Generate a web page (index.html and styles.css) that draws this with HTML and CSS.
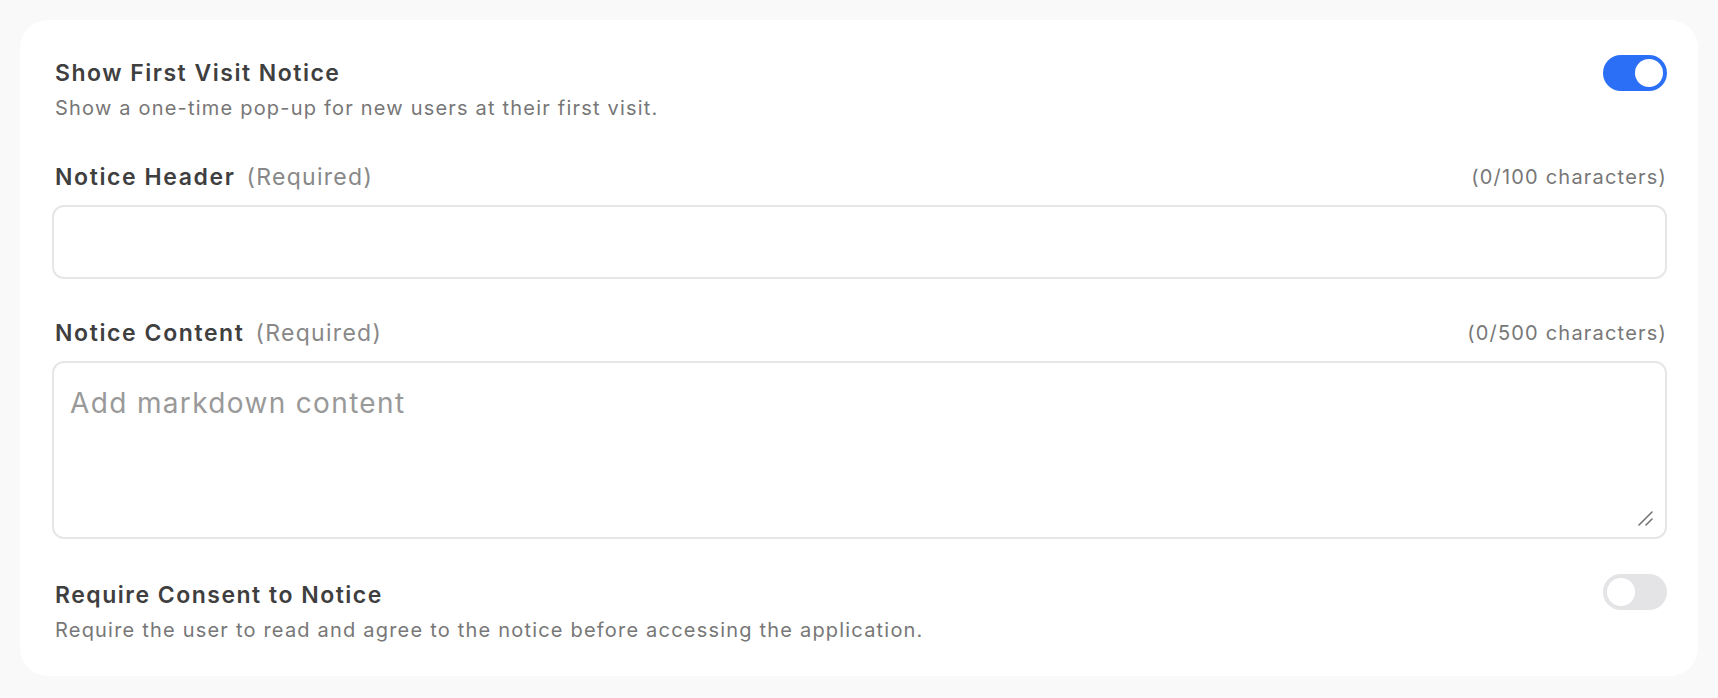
FILE: index.html
```html
<!DOCTYPE html>
<html lang="en">
<head>
<meta charset="utf-8">
<title>First Visit Notice</title>
<link rel="stylesheet" href="styles.css">
</head>
<body>
<div class="card">
  <div class="toggle-row">
    <div class="toggle-text">
      <div class="title">Show First Visit Notice</div>
      <div class="desc">Show a one-time pop-up for new users at their first visit.</div>
    </div>
    <div class="switch on"><span class="knob"></span></div>
  </div>

  <div class="field field-header">
    <div class="label-row">
      <div class="label">Notice Header<span class="req">(Required)</span></div>
      <div class="counter">(0/100 characters)</div>
    </div>
    <input class="text-input" type="text">
  </div>

  <div class="field field-content">
    <div class="label-row">
      <div class="label">Notice Content<span class="req">(Required)</span></div>
      <div class="counter">(0/500 characters)</div>
    </div>
    <div class="area-wrap">
      <textarea class="text-area" placeholder="Add markdown content"></textarea>
      <svg class="grip" width="16" height="16" viewBox="0 0 16 16" aria-hidden="true">
        <line x1="1" y1="15" x2="14" y2="2"/>
        <line x1="8" y1="15" x2="14" y2="9"/>
      </svg>
    </div>
  </div>

  <div class="toggle-row toggle-row-last">
    <div class="toggle-text">
      <div class="title">Require Consent to Notice</div>
      <div class="desc">Require the user to read and agree to the notice before accessing the application.</div>
    </div>
    <div class="switch off"><span class="knob"></span></div>
  </div>
</div>
</body>
</html>
```

FILE: styles.css
```css
* { box-sizing: border-box; }

html, body {
  margin: 0;
  padding: 0;
  background: #f9f9f9;
}

body {
  padding: 20px;
  font-family: "Inter", "Liberation Sans", sans-serif;
  color: #404040;
}

.card {
  background: #ffffff;
  border-radius: 28px;
  padding: 34px 31px 32px 32px;
  height: 656px;
}

.toggle-row {
  display: flex;
  justify-content: space-between;
  align-items: flex-start;
}

.toggle-row-last {
  margin-top: 37px;
}

.toggle-text {
  padding-left: 3px;
}

.title {
  font-size: 23px;
  font-weight: 600;
  line-height: 38px;
  letter-spacing: 1.5px;
  color: #3f3f3f;
}

.desc {
  margin-top: 2px;
  font-size: 20px;
  line-height: 28px;
  letter-spacing: 1.2px;
  color: #777777;
}

.switch {
  position: relative;
  width: 64px;
  height: 36px;
  border-radius: 18px;
  margin-top: 1px;
  flex-shrink: 0;
}

.toggle-row-last .switch { margin-top: -2px; }

.switch.on { background: #2a6ff5; }
.switch.off { background: #e4e4e7; }

.knob {
  position: absolute;
  top: 4px;
  width: 28px;
  height: 28px;
  border-radius: 50%;
  background: #ffffff;
}

.switch.on .knob { right: 4px; }
.switch.off .knob { left: 4px; }

.field-header { margin-top: 38px; }
.field-content { margin-top: 37px; }

.label-row {
  display: flex;
  justify-content: space-between;
  align-items: center;
  padding-left: 3px;
}

.label {
  font-size: 23px;
  font-weight: 600;
  line-height: 34px;
  letter-spacing: 1.6px;
  color: #3f3f3f;
}

.req {
  margin-left: 11px;
  font-weight: 400;
  font-size: 23px;
  letter-spacing: 1.3px;
  color: #888888;
}

.counter {
  font-size: 20px;
  line-height: 26px;
  letter-spacing: 1.2px;
  color: #777777;
}

.text-input,
.text-area {
  display: block;
  width: 100%;
  border: 2px solid #e6e6e6;
  border-radius: 12px;
  background: #ffffff;
  font-family: "Inter", "Liberation Sans", sans-serif;
  outline: none;
}

.text-input {
  margin-top: 11px;
  height: 74px;
  padding: 0 16px;
  font-size: 22px;
}

.area-wrap {
  position: relative;
  margin-top: 11px;
}

.text-area {
  height: 178px;
  padding: 19px 16px 16px;
  font-size: 28px;
  line-height: 42px;
  letter-spacing: 1.35px;
  color: #404040;
  resize: none;
}

.text-area::placeholder {
  color: #999999;
}

.grip {
  position: absolute;
  right: 13px;
  bottom: 13px;
  stroke: #6f6f6f;
  stroke-width: 1.5;
  stroke-linecap: round;
}
```
